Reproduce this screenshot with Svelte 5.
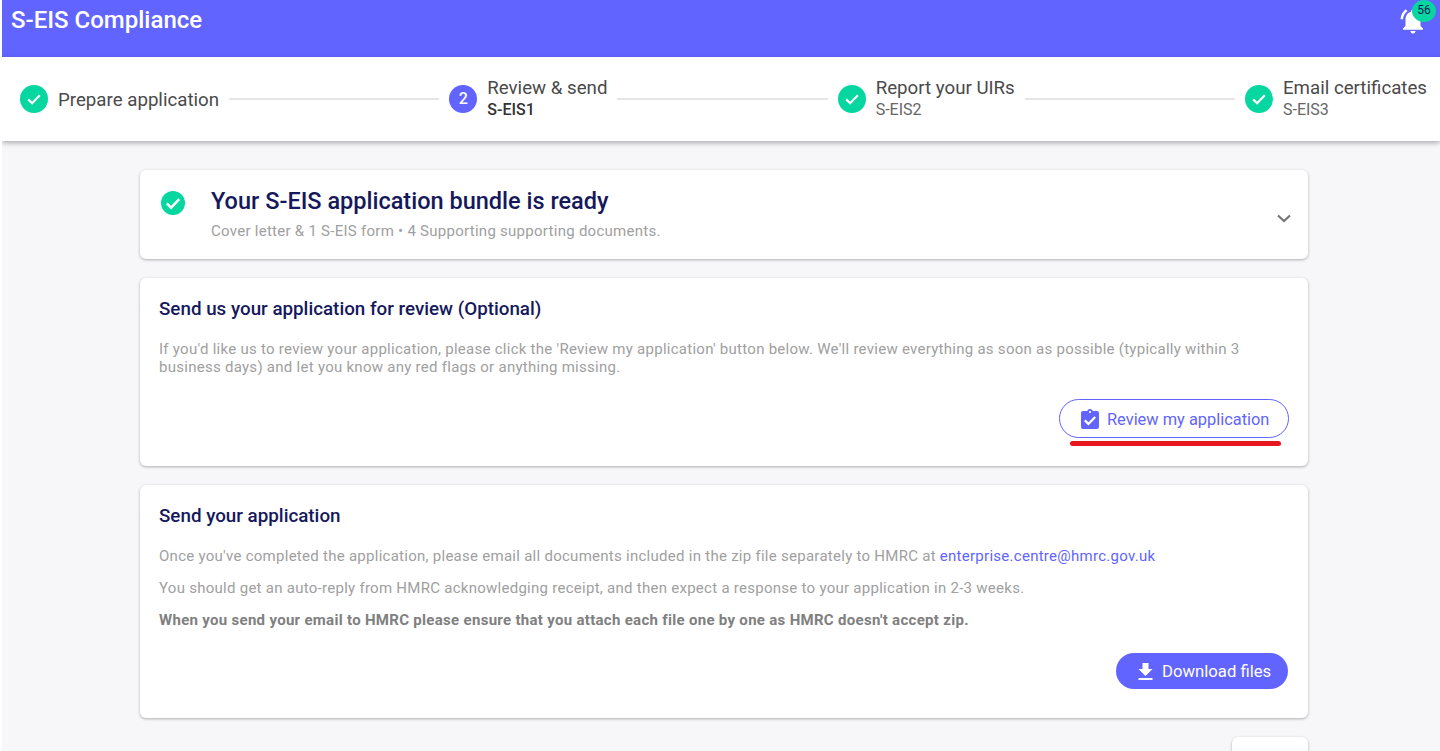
<script lang="ts">
	const steps = [
		{ label: "Prepare application", sub: "", done: true },
		{ label: "Review & send", sub: "S-EIS1", done: false, num: 2 },
		{ label: "Report your UIRs", sub: "S-EIS2", done: true },
		{ label: "Email certificates", sub: "S-EIS3", done: true },
	];
</script>

<div class="page">
	<header class="topbar">
		<div class="brand">S-EIS Compliance</div>
		<div class="bell">
			<svg viewBox="0 0 24 24" width="30" height="30" aria-hidden="true">
				<path fill="#fff" d="M7.58 4.08 6.15 2.65C3.75 4.48 2.17 7.3 2.03 10.5h2c.15-2.65 1.51-4.97 3.55-6.42zM19.97 10.5h2c-.15-3.2-1.73-6.02-4.12-7.85l-1.42 1.43c2.02 1.45 3.39 3.77 3.54 6.42zM18 11c0-3.07-1.64-5.64-4.5-6.32V4c0-.83-.67-1.5-1.5-1.5s-1.5.67-1.5 1.5v.68C7.63 5.36 6 7.92 6 11v5l-2 2v1h16v-1l-2-2v-5zM12 22c.14 0 .27-.01.4-.04.65-.14 1.18-.58 1.44-1.18.1-.24.15-.5.15-.78h-4c.01 1.1.9 2 2.01 2z" />
			</svg>
			<span class="badge">56</span>
		</div>
	</header>

	<nav class="stepper">
		{#each steps as s, i}
			{#if i > 0}<div class="connector"></div>{/if}
			<div class="step">
				{#if s.done}
					<svg class="step-icon" viewBox="0 0 28 28" aria-hidden="true">
						<circle cx="14" cy="14" r="14" fill="#06d6a0" />
						<path d="M8.2 14.400l3.900 3.800 7.700-7.900" fill="none" stroke="#fff" stroke-width="2.200" />
					</svg>
				{:else}
					<span class="step-num">{s.num}</span>
				{/if}
				<div class="step-text" class:has-sub={s.sub}>
					<div class="step-label">{s.label}</div>
					{#if s.sub}<div class="step-sub" class:active={!s.done}>{s.sub}</div>{/if}
				</div>
			</div>
		{/each}
	</nav>

	<main class="content">
		<section class="card bundle">
			<svg class="bundle-icon" viewBox="0 0 24 24" aria-hidden="true">
				<circle cx="12" cy="12" r="12" fill="#06d6a0" />
				<path d="M5.800 12.400l4.300 4.300 8.100-8.500" fill="none" stroke="#fff" stroke-width="2.400" />
			</svg>
			<div class="bundle-text">
				<h1>Your S-EIS application bundle is ready</h1>
				<p>Cover letter &amp; 1 S-EIS form • 4 Supporting supporting documents.</p>
			</div>
			<svg class="chevron" viewBox="0 0 14 9" aria-hidden="true">
				<path d="M1 1.500 7 7l6-5.500" fill="none" stroke="#757575" stroke-width="2.200" />
			</svg>
		</section>

		<section class="card review">
			<h2>Send us your application for review (Optional)</h2>
			<p class="body-text">If you'd like us to review your application, please click the 'Review my application' button below. We'll review everything as soon as possible (typically within 3 business days) and let you know any red flags or anything missing.</p>
			<div class="actions">
				<div class="review-wrap">
					<button class="btn outline">
						<svg viewBox="0 0 18 20" width="18" height="20" aria-hidden="true">
							<path fill="#6164ff" d="M16 2h-4.200C11.400.8 10.300 0 9 0S6.600.8 6.200 2H2C.9 2 0 2.900 0 4v14c0 1.100.9 2 2 2h14c1.100 0 2-.9 2-2V4c0-1.100-.9-2-2-2zM9 2c.55 0 1 .45 1 1s-.45 1-1 1-1-.45-1-1 .45-1 1-1z" />
							<path d="M3.800 11.400l3.600 3.500 6.800-7" fill="none" stroke="#fff" stroke-width="2.200" />
						</svg>
						Review my application
					</button>
					<span class="underline"></span>
				</div>
			</div>
		</section>

		<section class="card send">
			<h2>Send your application</h2>
			<p class="body-text">Once you've completed the application, please email all documents included in the zip file separately to HMRC at <a href="mailto:enterprise.centre@hmrc.gov.uk">enterprise.centre@hmrc.gov.uk</a></p>
			<p class="body-text">You should get an auto-reply from HMRC acknowledging receipt, and then expect a response to your application in 2-3 weeks.</p>
			<p class="body-text"><strong>When you send your email to HMRC please ensure that you attach each file one by one as HMRC doesn't accept zip.</strong></p>
			<div class="actions">
				<button class="btn solid">
					<svg viewBox="0 0 14 17" width="15" height="17" aria-hidden="true">
						<path fill="#fff" d="M14 6h-4V0H4v6H0l7 7 7-7zM0 15v2h14v-2H0z" />
					</svg>
					Download files
				</button>
			</div>
		</section>

		<div class="card stub"></div>
	</main>
</div>

<style>
	:global(body) {
		margin: 0;
		background: #fff;
		overflow: hidden;
	}
	.page {
		margin-left: 2px;
		height: 751px;
		overflow: hidden;
		background: #f7f7fa;
		font-family: Roboto, "Liberation Sans", sans-serif;
	}
	.topbar {
		height: 57px;
		background: #6164ff;
		display: flex;
		justify-content: space-between;
		padding: 0 12px 0 9px;
		box-sizing: border-box;
		position: relative;
	}
	.brand {
		color: #fff;
		font-size: 24px;
		font-weight: 500;
		line-height: 40px;
	}
	.bell {
		position: relative;
		width: 30px;
		height: 30px;
		margin-top: 6px;
	}
	.badge {
		position: absolute;
		right: -8px;
		top: -6px;
		width: 24px;
		height: 22px;
		border-radius: 50%;
		background: #06d6a0;
		color: #0a1a4f;
		font-size: 12px;
		line-height: 21px;
		text-align: center;
	}
	.stepper {
		height: 84px;
		box-sizing: border-box;
		background: #fff;
		display: flex;
		align-items: center;
		padding: 0 13px 0 18px;
		box-shadow: 0 2px 5px rgba(0, 0, 0, 0.3);
		position: relative;
	}
	.step {
		display: flex;
		align-items: center;
		gap: 10px;
		flex: none;
	}
	.step-icon,
	.step-num {
		width: 28px;
		height: 28px;
		flex: none;
	}
	.step-num {
		border-radius: 50%;
		background: #6164ff;
		color: #fff;
		font-size: 16px;
		font-weight: 500;
		line-height: 28px;
		text-align: center;
	}
	.step-text {
		margin-top: 2px;
	}
	.step-text.has-sub {
		margin-top: 0;
		margin-bottom: 2px;
	}
	.step-label {
		font-size: 18.7px;
		line-height: 22px;
		color: #4a4a4a;
		white-space: nowrap;
	}
	.step-sub {
		font-size: 16px;
		line-height: 21px;
		color: #666;
	}
	.step-sub.active {
		color: #333;
		font-weight: 500;
	}
	.connector {
		flex: 1;
		height: 2px;
		background: #e6e6e6;
		margin: 0 10px;
	}
	.content {
		padding: 29px 132px 0 138px;
		display: flex;
		flex-direction: column;
		gap: 19px;
	}
	.card {
		background: #fff;
		border-radius: 6px;
		box-shadow: 0 1px 3px rgba(0, 0, 0, 0.3);
		box-sizing: border-box;
	}
	.bundle {
		height: 89px;
		display: flex;
		align-items: flex-start;
		padding: 21px 17px 0 21px;
	}
	.bundle-icon {
		width: 24px;
		height: 24px;
		flex: none;
		margin-right: 26px;
	}
	.bundle-text {
		flex: 1;
	}
	h1 {
		margin: -5px 0 0;
		font-size: 23.5px;
		font-weight: 500;
		line-height: 30px;
		color: #15195c;
	}
	.bundle-text p {
		margin: 5px 0 0;
		font-size: 15px;
		line-height: 20px;
		color: #a0a0a0;
		letter-spacing: 0.27px;
	}
	.chevron {
		width: 14px;
		height: 9px;
		margin-top: 23px;
		flex: none;
	}
	.review {
		height: 188px;
		padding: 19px 19px 0;
	}
	.send {
		height: 233px;
		padding: 19px 19px 0;
	}
	h2 {
		margin: 0 0 19px;
		font-size: 18.8px;
		font-weight: 500;
		line-height: 24px;
		color: #15195c;
	}
	.body-text {
		margin: 0 0 14px;
		font-size: 15px;
		line-height: 18px;
		color: #a0a0a0;
		letter-spacing: 0.27px;
	}
	.body-text a {
		color: #6164ff;
		text-decoration: none;
	}
	.body-text strong {
		color: #808080;
		font-weight: 700;
		letter-spacing: 0.3px;
	}
	.actions {
		display: flex;
		justify-content: flex-end;
	}
	.review .actions {
		margin-top: 23px;
	}
	.send .actions {
		margin-top: 24px;
		margin-right: 1px;
	}
	.review-wrap {
		position: relative;
	}
	.btn {
		font-family: inherit;
		font-size: 16.4px;
		height: 39px;
		border-radius: 20px;
		display: flex;
		align-items: center;
		gap: 8px;
		padding: 1px 0 0 21px;
		box-sizing: border-box;
		cursor: pointer;
		white-space: nowrap;
	}
	.btn svg {
		margin-top: -1px;
		flex: none;
	}
	.outline {
		background: #fff;
		border: 1px solid #6164ff;
		color: #6164ff;
		width: 230px;
	}
	.solid {
		background: #6164ff;
		border: none;
		color: #fff;
		width: 172px;
		height: 36px;
		font-size: 16.7px;
		gap: 9px;
		padding-left: 22px;
	}
	.underline {
		position: absolute;
		left: 11px;
		right: 8px;
		top: 42px;
		height: 5px;
		border-radius: 3px;
		background: #e8171f;
	}
	.stub {
		width: 76px;
		height: 40px;
		align-self: flex-end;
	}
</style>
